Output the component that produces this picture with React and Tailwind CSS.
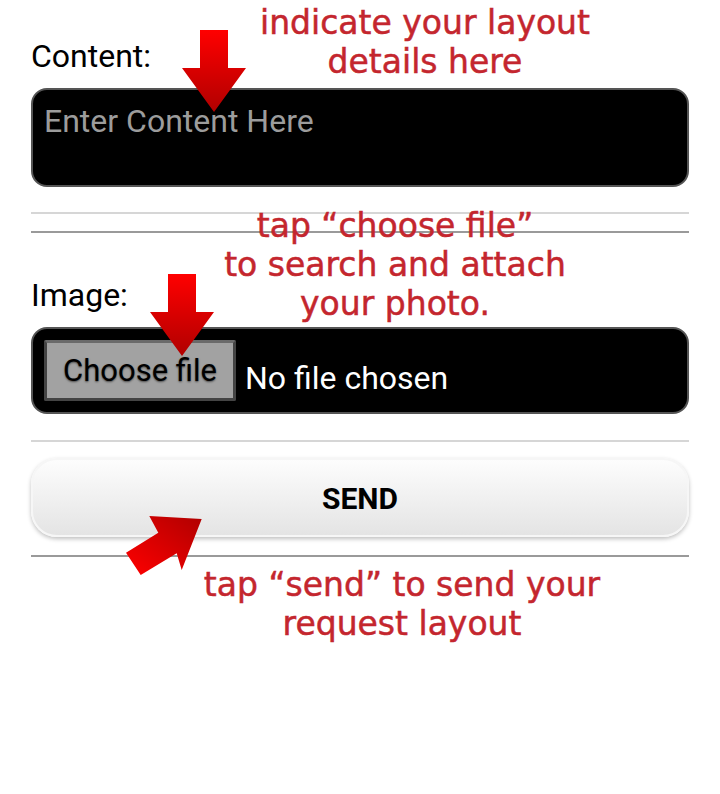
import React from "react";

function DownArrow({ id, className }) {
  return (
    <svg className={className} width="64" height="82" viewBox="0 0 64 82">
      <defs>
        <linearGradient id={id} x1="0" y1="0" x2="0" y2="1">
          <stop offset="0" stopColor="#ff0000" />
          <stop offset="1" stopColor="#b00000" />
        </linearGradient>
      </defs>
      <polygon points="18,0 46,0 46,38 64,38 32,82 0,38 18,38" fill={`url(#${id})`} />
    </svg>
  );
}

function DiagArrow({ className }) {
  return (
    <svg className={className} width="90" height="70" viewBox="0 0 90 70">
      <defs>
        <linearGradient id="dg" x1="0" y1="1" x2="1" y2="0">
          <stop offset="0" stopColor="#ff0000" />
          <stop offset="1" stopColor="#b00000" />
        </linearGradient>
      </defs>
      <polygon
        points="6,42.7 38.3,22.7 29.3,6 81.7,9 61.7,60 56.7,43.3 20.7,65"
        fill="url(#dg)"
      />
    </svg>
  );
}

export default function App() {
  const ann = "absolute w-[440px] text-center text-[33px] leading-[39px] text-[#c4262e] [-webkit-text-stroke:0.5px_#c4262e] [font-family:'DejaVu_Sans',sans-serif] whitespace-nowrap";
  return (
    <div className="relative w-[720px] h-[794px] bg-white overflow-hidden [font-family:Roboto,'Liberation_Sans',sans-serif]">
      <div className="flex flex-col px-[31px]">
        <div className="mt-[38px] text-[32px] leading-[36px] text-black">Content:</div>
        <div className="mt-[14px] h-[99px] rounded-[16px] border-2 border-[#555] bg-black px-[11px] pt-[13px]">
          <div className="text-[32px] leading-[36px] text-[#9c9c9c]">Enter Content Here</div>
        </div>
        <div className="mt-[25px] h-[2px] bg-[#d6d6d6]" />
        <div className="mt-[17px] h-[2px] bg-[#9a9a9a]" />
        <div className="mt-[44px] text-[32px] leading-[36px] text-black">Image:</div>
        <div className="mt-[14px] h-[87px] rounded-[16px] border-2 border-[#555] bg-black flex items-center pl-[11px] gap-[9px]">
          <div className="h-[61px] w-[192px] flex items-center justify-center rounded-[2px] border-[3px] border-[#444] border-t-[#6a6a6a] bg-[#a2a2a2] text-[31px] leading-none text-black [text-shadow:0_1px_2px_rgba(0,0,0,0.55)]">
            Choose file
          </div>
          <div className="text-[32px] leading-none text-white pt-[14px]">No file chosen</div>
        </div>
        <div className="mt-[26px] h-[2px] bg-[#d6d6d6]" />
        <div className="mt-[16px] h-[79px] rounded-[26px] border-2 border-[#f6f6f6] bg-gradient-to-b from-[#fdfdfd] to-[#e4e4e4] shadow-[0_2px_4px_rgba(0,0,0,0.25)] flex items-center justify-center">
          <span className="text-[30px] font-bold leading-none text-black pt-[2px]">SEND</span>
        </div>
        <div className="mt-[18px] h-[2px] bg-[#9a9a9a]" />
      </div>

      <div className={ann + " left-[205px] top-[3px]"}>
        indicate your layout
        <br />
        details here
      </div>
      <div className={ann + " left-[175px] top-[206px]"}>
        tap “choose file”
        <br />
        to search and attach
        <br />
        your photo.
      </div>
      <div className={ann + " left-[182px] top-[565px]"}>
        tap “send” to send your
        <br />
        request layout
      </div>

      <DownArrow id="a1" className="absolute left-[182px] top-[30px]" />
      <DownArrow id="a2" className="absolute left-[150px] top-[274px]" />
      <DiagArrow className="absolute left-[120px] top-[510px]" />
    </div>
  );
}
